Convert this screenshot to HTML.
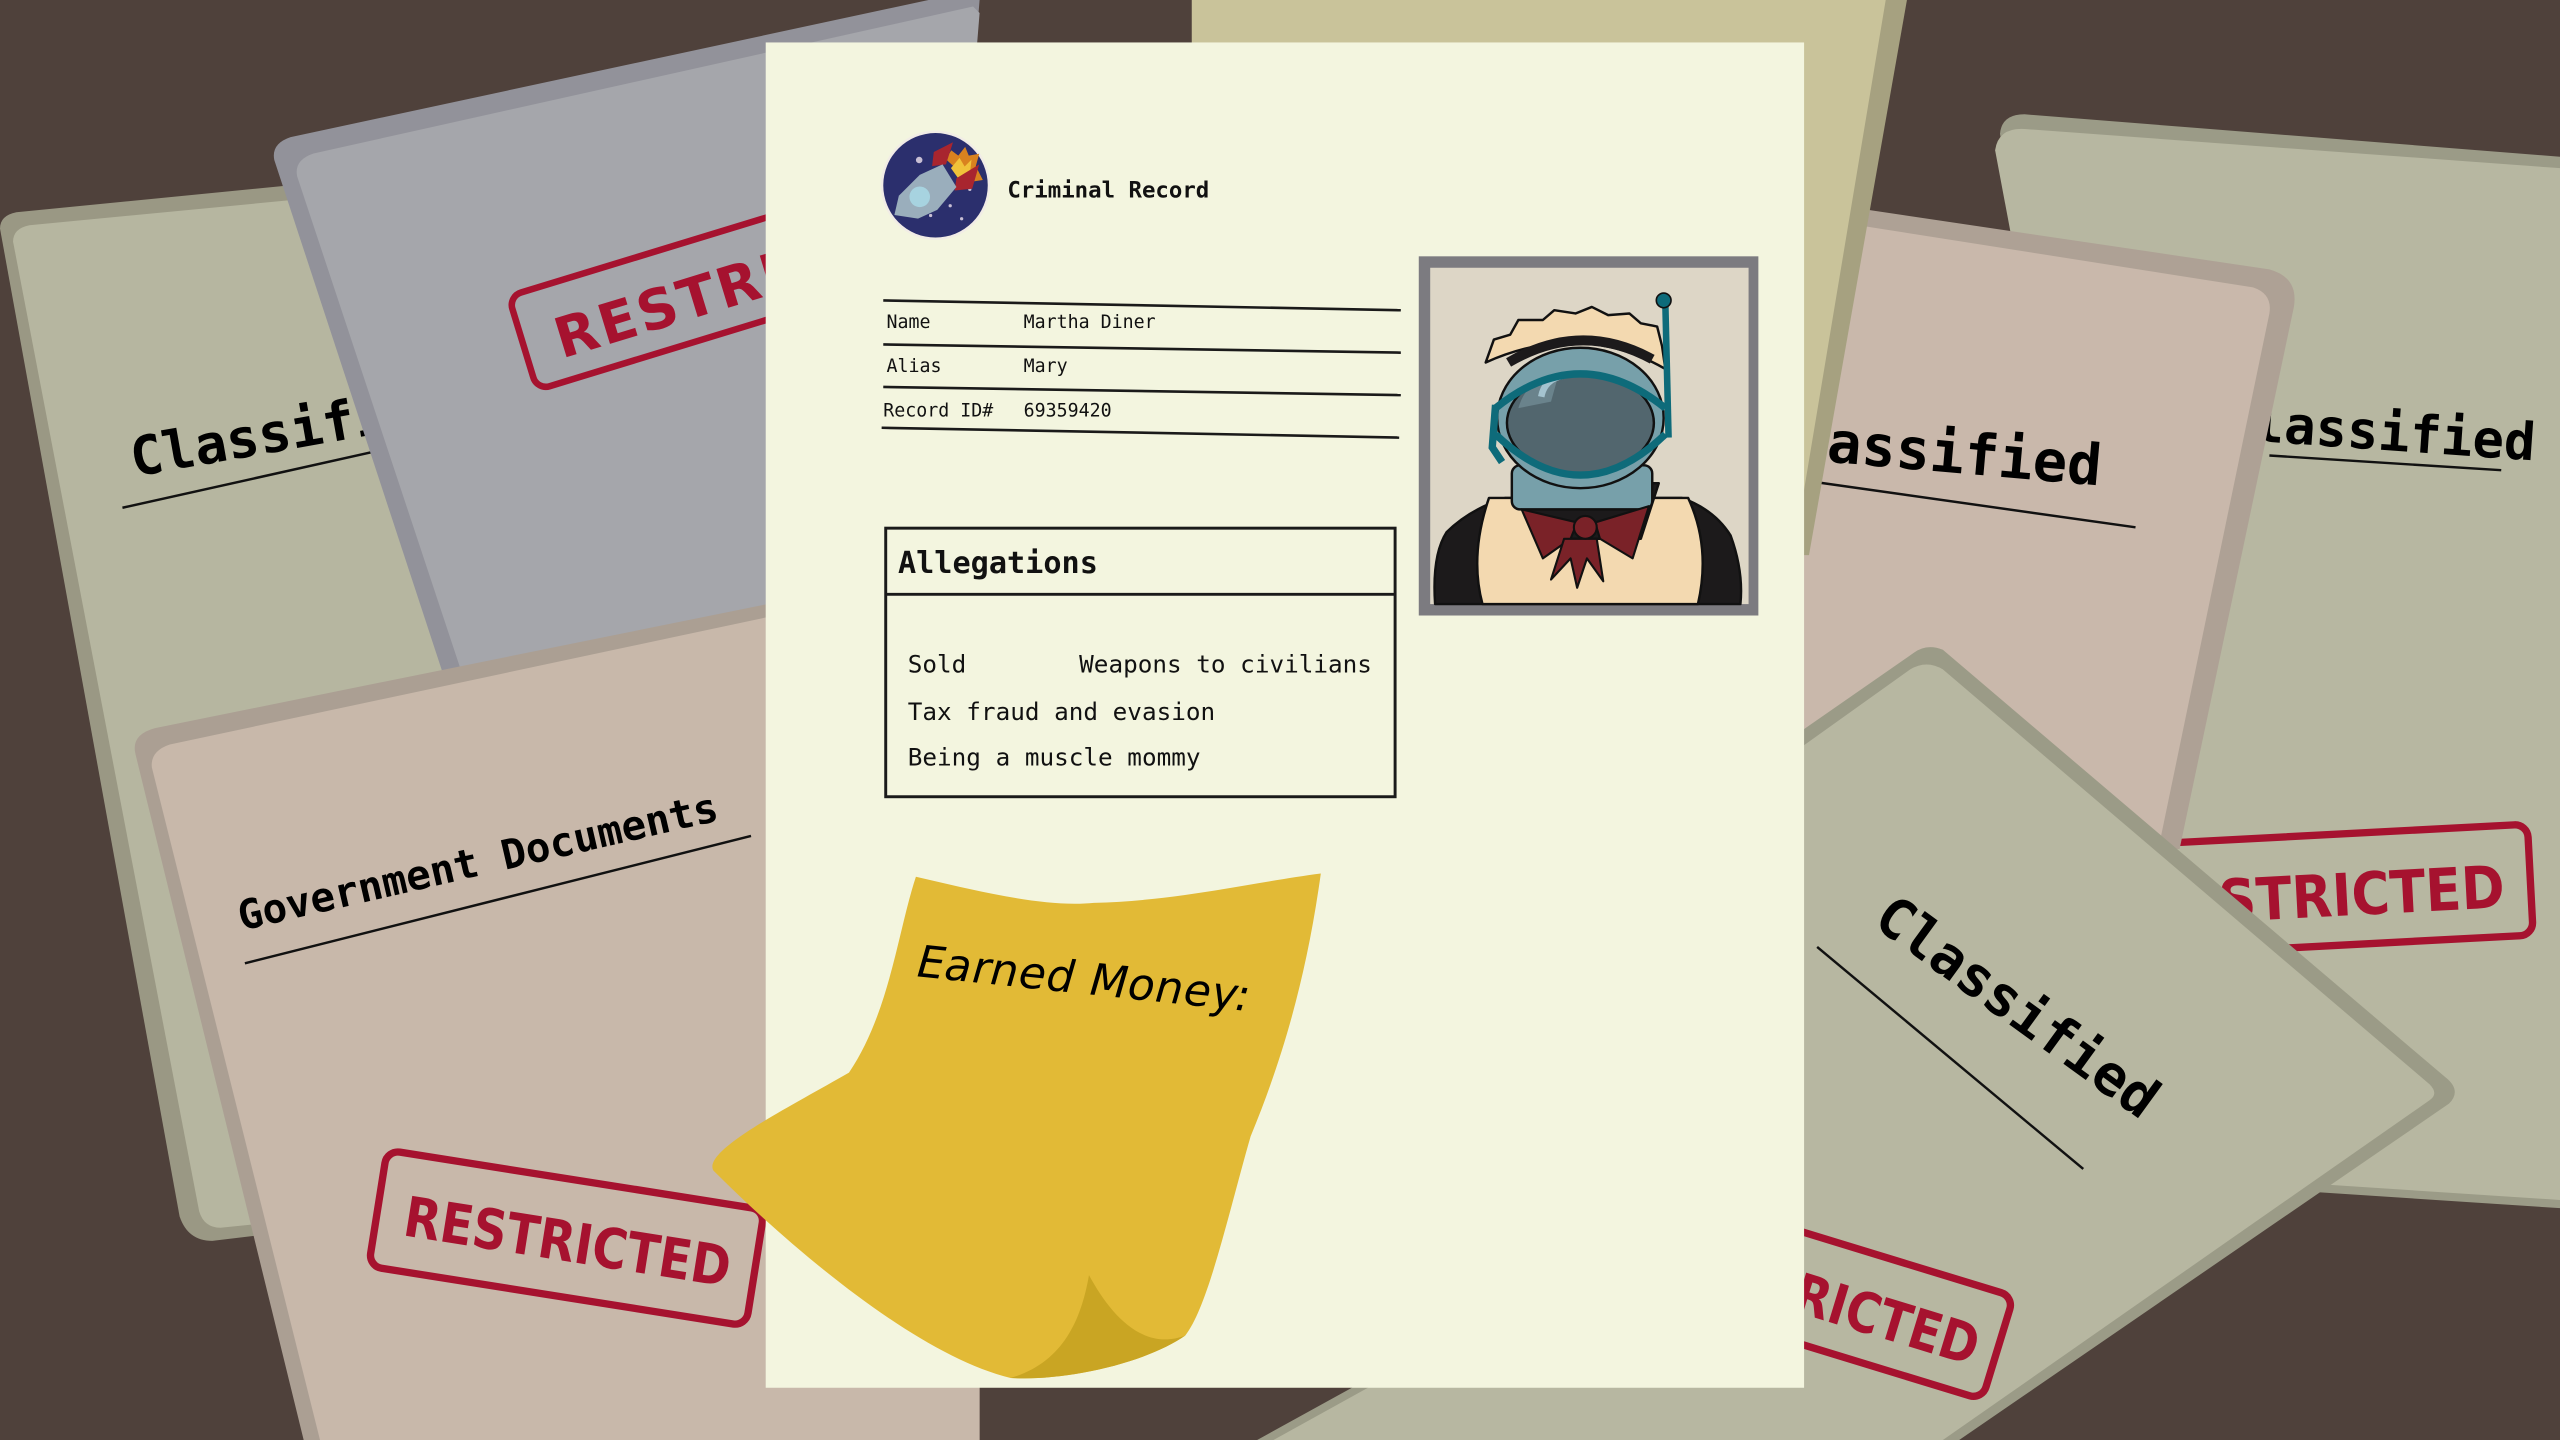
<!DOCTYPE html>
<html><head><meta charset="utf-8"><style>
html,body{margin:0;padding:0;background:#4f413b;}
svg{display:block}
.mono{font-family:"DejaVu Sans Mono","Liberation Mono",monospace;}
.stamp{font-family:"DejaVu Sans","Liberation Sans",sans-serif;font-weight:bold;fill:#a6122f;}
</style></head><body>
<svg width="2560" height="1440" viewBox="0 0 1568 882" preserveAspectRatio="none" xmlns="http://www.w3.org/2000/svg">
<rect width="1568" height="882" fill="#4f413b"/>

<path d="M0,140 Q0,132 10,130 L620,70 L640,700 L130,760 Q115,760 110,745 Z" fill="#9a9884"/>
<path d="M8,148 Q8,140 18,138 L620,80 L640,700 L135,752 Q125,752 122,742 Z" fill="#b6b6a0"/>
<g transform="rotate(-10 82 292)"><text x="82" y="292" class="mono" font-weight="bold" font-size="33" fill="#000">Classified</text></g>
<line x1="75" y1="311" x2="250" y2="272" stroke="#111" stroke-width="1.5"/>

<path d="M168,98 Q166,88 178,84 L592,-5 L600,0 L560,500 L300,500 Z" fill="#92929a"/>
<path d="M182,108 Q180,98 192,94 L596,4 L600,8 L560,500 L312,500 Z" fill="#a5a6ab"/>
<g transform="rotate(-17 330 225)">
<rect x="325" y="178" width="280" height="60" rx="8" fill="none" stroke="#a6122f" stroke-width="4"/>
<text x="345" y="224" class="stamp" font-size="34" textLength="250">RESTRICTED</text></g>

<path d="M83,462 Q80,450 95,446 L470,370 L600,360 L600,882 L186,882 Z" fill="#ab9f93"/>
<path d="M93,470 Q92,460 104,456 L470,378 L600,368 L600,882 L196,882 Z" fill="#c8b8aa"/>
<g transform="rotate(-13 148 570)"><text x="148" y="570" class="mono" font-weight="bold" font-size="25" fill="#000">Government Documents</text></g>
<line x1="150" y1="590" x2="460" y2="512" stroke="#111" stroke-width="1.5"/>
<g transform="rotate(9 345 758)">
<rect x="230" y="722" width="234" height="72" rx="8" fill="none" stroke="#a6122f" stroke-width="4.5"/>
<text x="247" y="772" class="stamp" font-size="34" textLength="202" lengthAdjust="spacingAndGlyphs">RESTRICTED</text></g>

<path d="M1225,82 Q1226,70 1240,70 L1568,96 L1568,740 L1340,725 Z" fill="#9b9b87"/>
<path d="M1222,92 Q1224,78 1240,79 L1568,103 L1568,735 L1340,720 Z" fill="#b7b7a1"/>
<g transform="rotate(4 1380 270)"><text x="1360" y="270" class="mono" font-weight="bold" font-size="32" fill="#000">Classified</text></g>
<line x1="1390" y1="279" x2="1532" y2="288" stroke="#111" stroke-width="1.5"/>
<g transform="rotate(-3 1450 545)">
<rect x="1260" y="510" width="290" height="68" rx="8" fill="none" stroke="#a6122f" stroke-width="4.5"/>
<text x="1312" y="560" class="stamp" font-size="36" textLength="222" lengthAdjust="spacingAndGlyphs">RESTRICTED</text></g>

<path d="M1100,122 L1390,165 Q1408,170 1405,188 L1335,520 L1100,520 Z" fill="#aea195"/>
<path d="M1100,132 L1380,176 Q1392,180 1390,192 L1322,520 L1100,520 Z" fill="#c9b8ab"/>
<g transform="rotate(5 1122 285)"><text x="1076" y="283" class="mono" font-weight="bold" font-size="35" fill="#000">Classified</text></g>
<line x1="1110" y1="295" x2="1308" y2="323" stroke="#111" stroke-width="1.5"/>

<path d="M730,0 L1168,0 L1108,340 L730,340 Z" fill="#a6a180"/>
<path d="M730,0 L1155,0 L1100,330 L730,330 Z" fill="#c9c39a"/>

<path d="M1100,450 L1172,400 Q1180,394 1190,398 L1498,660 Q1508,668 1500,676 L1200,882 L770,882 L1100,700 Z" fill="#9b9b87"/>
<path d="M1100,460 L1170,410 Q1180,404 1190,410 L1488,664 Q1494,670 1488,674 L1190,882 L780,882 L1100,705 Z" fill="#b7b7a1"/>
<g transform="rotate(36 1146 566)"><text x="1146" y="566" class="mono" font-weight="bold" font-size="34" fill="#000">Classified</text></g>
<line x1="1113" y1="580" x2="1276" y2="716" stroke="#111" stroke-width="1.5"/>
<g transform="rotate(17 1150 800)">
<rect x="1010" y="770" width="218" height="66" rx="8" fill="none" stroke="#a6122f" stroke-width="4.5"/>
<text x="1018" y="818" class="stamp" font-size="34" textLength="198" lengthAdjust="spacingAndGlyphs">RESTRICTED</text></g>

<rect x="469" y="26" width="636" height="824" fill="#f3f5df"/>

<circle cx="573" cy="113.5" r="33.5" fill="#f1ece6"/>
<circle cx="573" cy="113.5" r="32" fill="#2b2f6d"/>
<g fill="#c8bfd4"><circle cx="563" cy="98" r="2"/><circle cx="557" cy="118" r="1"/><circle cx="576" cy="94" r="1"/><circle cx="582" cy="126" r="1"/><circle cx="589" cy="134" r="1"/><circle cx="570" cy="132" r="1"/><circle cx="594" cy="116" r="1"/></g>
<g transform="translate(573 113.5) scale(1.05)">
<polygon points="6,-15.3 9.2,-20.4 13.3,-17.3 17.3,-22.4 19.4,-17.3 25.5,-18.4 23.5,-11.2 27.6,-3.1 20.4,-2" fill="#d9821f"/>
<polygon points="9,-10 14,-16 17,-11 21,-15 20,-6 14,-3" fill="#f0c23a"/>
<polygon points="-2,-11.2 -1,-19.4 10.2,-25.1 6.1,-12.2" fill="#a8252f"/>
<polygon points="11.2,3 12.2,-4.1 25.5,-12.2 21.4,2" fill="#a8252f"/>
<polygon points="-24,17.3 -21.4,6.1 -9.2,-6.1 4.1,-12.2 12.2,1 1,14.3 -10.2,19.4" fill="#9aaebc"/>
<circle cx="-9.2" cy="6.7" r="6" fill="#a7d3e0"/>
</g>
<text x="617" y="121" class="mono" font-weight="bold" font-size="13.7" fill="#111">Criminal Record</text>

<g stroke="#1a1a1a" stroke-width="1.6">
<line x1="541" y1="184" x2="858" y2="190"/>
<line x1="541" y1="211" x2="858" y2="216"/>
<line x1="541" y1="237" x2="858" y2="242"/>
<line x1="540" y1="262" x2="857" y2="268"/>
</g>
<g class="mono" font-size="11.2" fill="#111">
<text x="543" y="201">Name</text><text x="627" y="201">Martha Diner</text>
<text x="543" y="228">Alias</text><text x="627" y="228">Mary</text>
<text x="541" y="255">Record ID#</text><text x="627" y="255">69359420</text>
</g>

<rect x="542.5" y="323.5" width="312" height="164.5" fill="none" stroke="#1a1a1a" stroke-width="1.8"/>
<line x1="542.5" y1="364" x2="854.5" y2="364" stroke="#1a1a1a" stroke-width="1.8"/>
<text x="550" y="351" class="mono" font-weight="bold" font-size="18.5" fill="#111">Allegations</text>
<g class="mono" font-size="14.9" fill="#111">
<text x="556" y="412">Sold</text><text x="661" y="412">Weapons to civilians</text>
<text x="556" y="441">Tax fraud and evasion</text>
<text x="556" y="469">Being a muscle mommy</text>
</g>

<rect x="869" y="157" width="208" height="220" fill="#7c7b80"/>
<rect x="876" y="164" width="195" height="206" fill="#ddd6c6"/>
<g stroke="#111" stroke-width="1.5" stroke-linejoin="round">
<path d="M879,370 Q877,340 886,326 Q900,312 922,305 L1030,305 Q1050,312 1060,328 Q1068,350 1066,370 Z" fill="#1c1a1b"/>
<path d="M912,305 Q900,340 908,370 L1040,370 Q1048,335 1034,305 Z" fill="#f3d9b0"/>
<path d="M930,296 L1016,296 L1005,330 L942,330 Z" fill="#1c1a1b"/>
<path d="M910,222 L915,208 L925,205 L930,196 L945,196 L952,190 L965,192 L975,188 L985,193 L998,192 L1005,198 L1015,200 L1018,212 L1020,226 Q968,196 910,222 Z" fill="#f3d9b0"/>
<path d="M924,222 Q968,196 1012,220" fill="none" stroke="#1c1a1b" stroke-width="6"/>
<rect x="926" y="285" width="86" height="27" rx="5" fill="#77a0aa"/>
<ellipse cx="968" cy="256" rx="51" ry="43" fill="#77a0aa"/>
<ellipse cx="968" cy="259" rx="45" ry="31" fill="#52666e"/>
</g>
<path d="M930,250 Q935,232 955,228 L950,246 Z" fill="#6a838c"/>
<path d="M944,243 Q946,232 958,230" fill="none" stroke="#a4c3cf" stroke-width="4"/>
<path d="M916,250 Q968,208 1020,250" fill="none" stroke="#0e6b7a" stroke-width="4.5"/>
<path d="M916,266 Q968,316 1020,266" fill="none" stroke="#0e6b7a" stroke-width="4.5"/>
<path d="M916,248 L914,274 L920,283" fill="none" stroke="#0e6b7a" stroke-width="4.5"/>
<g stroke="#111" stroke-width="1.3" stroke-linejoin="round" fill="#7a2228">
<path d="M932,312 L966,320 L962,330 L945,342 Z"/>
<path d="M1010,310 L977,320 L980,330 L1000,342 Z"/>
<path d="M958,330 L950,355 L962,342 L966,360 L972,342 L982,356 L978,330 Z"/>
<circle cx="971" cy="323" r="7"/>
</g>
<line x1="1020" y1="185" x2="1022" y2="268" stroke="#0e6b7a" stroke-width="4"/>
<circle cx="1019" cy="184" r="4.5" fill="#0e6b7a" stroke="#111" stroke-width="1"/>

<path d="M561,537 C600,546 640,556 670,553 C720,552 770,540 809,535 C800,600 785,650 766,696 C752,745 740,800 726,818 C700,836 650,846 619,844 C560,830 480,760 437,717 C430,705 480,680 520,657 C545,620 550,570 561,537 Z" fill="#e2ba36"/>
<path d="M667,781 C680,805 700,828 726,818 C700,836 650,846 619,844 C650,835 662,810 667,781 Z" fill="#c9a523"/>
<g transform="rotate(6 562 596) skewX(-10)"><text x="665" y="598" font-family="'DejaVu Sans','Liberation Sans',sans-serif" font-size="27" fill="#000" textLength="205">Earned Money:</text></g>
</svg>
</body></html>
